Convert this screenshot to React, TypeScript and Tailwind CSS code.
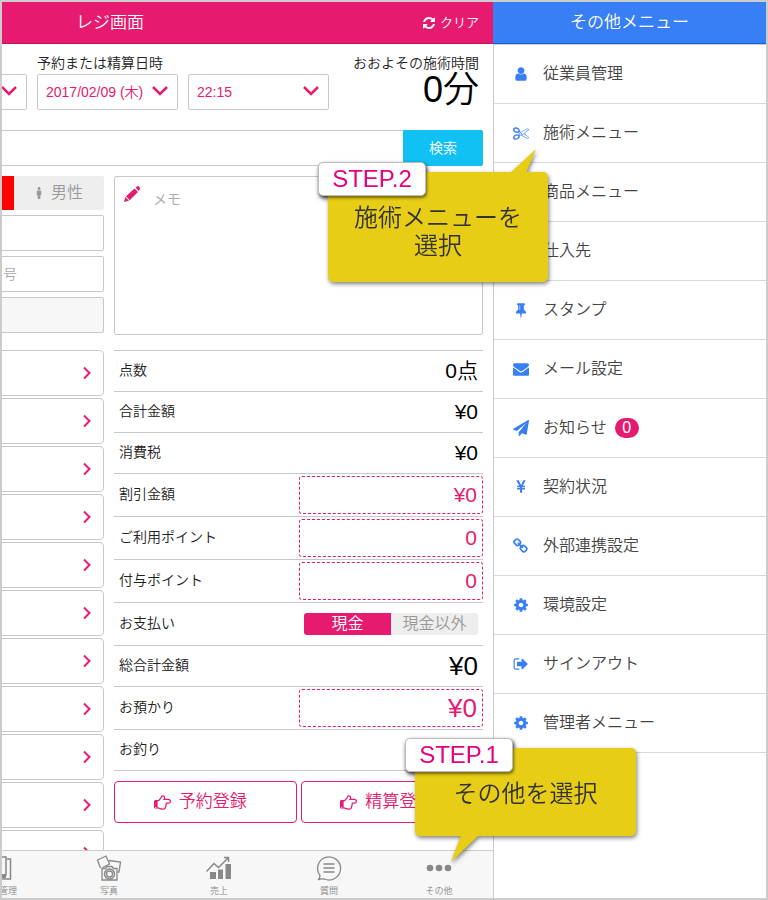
import type { ReactNode } from 'react';
import { FaMale } from 'react-icons/fa';

const ICONS = {
  user: 'M1536 1399q0 109-62.5 187t-150.5 78h-854q-88 0-150.5-78t-62.5-187q0-85 8.5-160.5t31.5-152 58.5-131 94-89 134.5-34.5q131 128 313 128t313-128q76 0 134.5 34.5t94 89 58.5 131 31.5 152 8.5 160.5zm-256-887q0 159-112.5 271.5t-271.5 112.5-271.5-112.5-112.5-271.5 112.5-271.5 271.5-112.5 271.5 112.5 112.5 271.5z',
  scissors: 'M960 896q26 0 45 19t19 45-19 45-45 19-45-19-19-45 19-45 45-19zm300 64l507 398q28 20 25 56-5 35-35 51l-128 64q-13 7-29 7-17 0-31-8l-690-387-110 66q-8 4-12 5 14 49 10 97-7 77-56 147.5t-132 123.5q-132 84-277 84-136 0-222-78-90-84-79-207 7-76 56-147t131-124q132-84 278-84 83 0 151 31 9-13 22-22l122-73-122-73q-13-9-22-22-68 31-151 31-146 0-278-84-82-53-131-124t-56-147q-5-59 15.5-113t63.5-93q85-79 222-79 145 0 277 84 83 52 132 123t56 148q4 48-10 97 4 1 12 5l110 66 690-387q14-8 31-8 16 0 29 7l128 64q30 16 35 51 3 36-25 56zm-681-260q46-42 21-108t-106-117q-92-59-192-59-74 0-113 36-46 42-21 108t106 117q92 59 192 59 74 0 113-36zm-85 745q81-51 106-117t-21-108q-39-36-113-36-100 0-192 59-81 51-106 117t21 108q39 36 113 36 100 0 192-59zm178-613l96 58v-11q0-36 33-56l14-8-79-44-26 26q-3 3-10 11t-12 12q-2 2-4 3.5t-3 2.5zm224 224l96 32 736-576-128-64-768 431v113l-160 96 9 8q2 2 7 6 4 4 11 12t11 12l26 26zm704 416l128-64-520-408-177 138q-2 3-13 7z',
  tack: 'M800 864v-448q0-14-9-23t-23-9-23 9-9 23v448q0 14 9 23t23 9 23-9 9-23zm672 352q0 26-19 45t-45 19h-429l-51 483q-2 12-10.5 20.5t-20.5 8.5h-1q-27 0-32-27l-76-485h-404q-26 0-45-19t-19-45q0-123 78.5-221.5t177.5-98.5v-512q-52 0-90-38t-38-90 38-90 90-38h640q52 0 90 38t38 90-38 90-90 38v512q99 0 177.5 98.5t78.5 221.5z',
  envelope: 'M1792 710v794q0 66-47 113t-113 47h-1472q-66 0-113-47t-47-113v-794q44 49 101 87 362 246 497 345 57 42 92.5 65.5t94.5 48 110 24.5h2q51 0 110-24.5t94.5-48 92.5-65.5q170-123 498-345 57-39 100-87zm0-294q0 79-49 151t-122 123q-376 261-468 325-10 7-42.5 30.5t-54 38-52 32.5-57.5 27-50 9h-2q-23 0-50-9t-57.5-27-52-32.5-54-38-42.5-30.5q-91-64-262-182.5t-205-142.5q-62-42-117-115.5t-55-136.5q0-78 41.5-130t118.5-52h1472q65 0 112.5 47t47.5 113z',
  plane: 'M1764 11q33 24 27 64l-256 1536q-5 29-32 45-14 8-31 8-11 0-24-5l-453-185-242 295q-18 23-49 23-13 0-22-4-19-7-30.5-23.5t-11.5-36.5v-349l864-1059-1069 925-395-162q-37-14-40-55-2-40 32-59l1664-960q15-9 32-9 20 0 36 11z',
  yen: 'M985.5 1536h-172q-13 0-22.5-9t-9.5-23v-330h-288q-13 0-22.5-9t-9.5-23v-103q0-13 9.5-22.5t22.5-9.5h288v-85h-288q-13 0-22.5-9t-9.5-23v-104q0-13 9.5-22.5t22.5-9.5h214l-321-578q-8-16 0-32 10-16 28-16h194q19 0 29 18l215 425q19 38 56 125 10-24 30.5-68t27.5-61l191-420q8-19 29-19h191q17 0 27 16 9 14 1 31l-313 579h215q13 0 22.5 9.5t9.5 22.5v104q0 14-9.5 23t-22.5 9h-290v85h290q13 0 22.5 9.5t9.5 22.5v103q0 14-9.5 23t-22.5 9h-290v330q0 13-9.5 22.5t-22.5 9.5z',
  link: 'M1456 1216q0-40-28-68l-208-208q-28-28-68-28-42 0-72 32 3 3 19 18.5t21.5 21.5 15 19 13 25.5 3.5 27.5q0 40-28 68t-68 28q-15 0-27.5-3.5t-25.5-13-19-15-21.5-21.5-18.5-19q-33 31-33 73 0 40 28 68l206 207q27 27 68 27 40 0 68-26l147-146q28-28 28-67zm-703-705q0-40-28-68l-206-207q-28-28-68-28-39 0-68 27l-147 146q-28 28-28 67 0 40 28 68l208 208q27 27 68 27 42 0 72-31-3-3-19-18.5t-21.5-21.5-15-19-13-25.5-3.5-27.5q0-40 28-68t68-28q15 0 27.5 3.5t25.5 13 19 15 21.5 21.5 18.5 19q33-31 33-73zm895 705q0 120-85 203l-147 146q-83 83-203 83-121 0-204-85l-206-207q-83-83-83-203 0-123 88-209l-88-88q-86 88-208 88-120 0-204-84l-208-208q-84-84-84-204t85-203l147-146q83-83 203-83 121 0 204 85l206 207q83 83 83 203 0 123-88 209l88 88q86-88 208-88 120 0 204 84l208 208q84 84 84 204z',
  cog: 'M1152 896q0-106-75-181t-181-75-181 75-75 181 75 181 181 75 181-75 75-181zm512-109v222q0 12-8 23t-20 13l-185 28q-19 54-39 91 35 50 107 138 10 12 10 25t-9 23q-27 37-99 108t-94 71q-12 0-26-9l-138-108q-44 23-91 38-16 136-29 186-7 28-36 28h-222q-14 0-24.5-8.500t-11.500-21.500l-28-184q-49-16-90-37l-141 107q-10 9-25 9-14 0-25-11-126-114-165-168-7-10-7-23 0-12 8-23 15-21 51-66.500t54-70.500q-27-50-41-99l-183-27q-13-2-21-12.500t-8-23.500v-222q0-12 8-23t19-13l186-28q14-46 39-92-40-57-107-138-10-12-10-24 0-10 9-23 26-36 98.500-107.500t94.500-71.500q13 0 26 10l138 107q44-23 91-38 16-136 29-186 7-28 36-28h222q14 0 24.500 8.500t11.500 21.500l28 184q49 16 90 37l142-107q9-9 24-9 13 0 25 10 129 119 165 170 7 8 7 22 0 12-8 23-15 21-51 66.500t-54 70.500q26 50 41 98l183 28q13 2 21 12.500t8 23.500z',
  signOut: 'M704 1440q0 4 1 20t.5 26.500-3 23.500-10 19.500-20.500 6.500h-320q-119 0-203.500-84.500t-84.500-203.500v-704q0-119 84.500-203.500t203.500-84.500h320q13 0 22.500 9.500t9.500 22.500q0 4 1 20t.5 26.500-3 23.500-10 19.500-20.500 6.500h-320q-66 0-113 47t-47 113v704q0 66 47 113t113 47h312l11.500 1 11.500 3 8 5.500 7 9 2 13.500zm928-544q0 26-19 45l-544 544q-19 19-45 19t-45-19-19-45v-288h-448q-26 0-45-19t-19-45v-384q0-26 19-45t45-19h448v-288q0-26 19-45t45-19 45 19l544 544q19 19 19 45z',
  refresh: 'M1639 1056q0 5-1 7-64 268-268 434.500t-478 166.500q-146 0-282.500-55t-243.500-157l-129 129q-19 19-45 19t-45-19-19-45v-448q0-26 19-45t45-19h448q26 0 45 19t19 45-19 45l-137 137q71 66 161 102t187 36q134 0 250-65t186-179q11-17 53-117 8-23 30-23h192q13 0 22.500 9.500t9.500 22.500zm25-800v448q0 26-19 45t-45 19h-448q-26 0-45-19t-19-45 19-45l138-138q-148-137-349-137-134 0-250 65t-186 179q-11 17-53 117-8 23-30 23h-199q-13 0-22.500-9.500t-9.500-22.500v-7q65-268 270-434.500t480-166.500q146 0 284 55.500t245 156.500l130-129q19-19 45-19t45 19 19 45z',
  hand: 'M256 1408q0-26-19-45t-45-19-45 19-19 45 19 45 45 19 45-19 19-45zm1408-640q0-51-39-89.500t-89-38.500h-576q0-20 15-48.500t33-55 33-68 15-84.500q0-67-44.500-97.500t-115.500-30.500q-24 0-90 139-24 44-37 65-40 64-112 145-71 81-101 106-69 57-140 57h-32v640h32q72 0 167 32t193.500 64 179.500 32q189 0 189-167 0-26-5-56 30-16 47.500-52.500t17.500-73.500-18-69q53-50 53-119 0-25-10-55.500t-25-47.500h331q52 0 90-38t38-90zm128-1q0 105-75.500 181t-180.500 76h-169q-4 62-37 119 3 21 3 43 0 101-60 178 1 139-85 219.500t-227 80.500q-133 0-322-69-164-59-223-59h-288q-53 0-90.500-37.500t-37.500-90.500v-640q0-53 37.500-90.500t90.500-37.500h288q10 0 21.500-4.500t23.500-14 22.500-18 24-22.500 20.500-21.500 19-21.500 14-17q65-74 100-129 13-21 33-62t37-72 40.500-63 55-49.500 69.500-17.500q125 0 206.500 67t81.500 189q0 68-22 128h374q104 0 180 76t76 179z',
};

type IconName = keyof typeof ICONS;

const Icon = ({ name, className }: { name: IconName; className: string }) => (
  <svg viewBox="0 0 1792 1792" fill="currentColor" aria-hidden="true" className={className}>
    <path d={ICONS[name]} />
  </svg>
);

const menuItems: { label: string; icon?: IconName; badge?: number }[] = [
  { label: '従業員管理', icon: 'user' },
  { label: '施術メニュー', icon: 'scissors' },
  { label: '商品メニュー' },
  { label: '仕入先' },
  { label: 'スタンプ', icon: 'tack' },
  { label: 'メール設定', icon: 'envelope' },
  { label: 'お知らせ', icon: 'plane', badge: 0 },
  { label: '契約状況', icon: 'yen' },
  { label: '外部連携設定', icon: 'link' },
  { label: '環境設定', icon: 'cog' },
  { label: 'サインアウト', icon: 'signOut' },
  { label: '管理者メニュー', icon: 'cog' },
];

const Picker = ({ label, value, className }: { label: string; value: string; className: string }) => (
  <div className={`relative h-9 shrink-0 ${className}`}>
    <select
      aria-label={label}
      className="h-full w-full appearance-none rounded-xs border border-[#c8c8c8] bg-white pl-2 text-sm text-[#e61a6e]"
    >
      <option>{value}</option>
    </select>
    <svg viewBox="0 0 16 10" className="pointer-events-none absolute right-[10px] top-3 h-[10px] w-4 text-[#e61a6e]" fill="none" stroke="currentColor" strokeWidth="2.5">
      <path d="M1 1l7 7 7-7" />
    </svg>
  </div>
);

const Row = ({ label, htmlFor, className, children }: { label: string; htmlFor?: string; className: string; children?: ReactNode }) => (
  <div className={`flex items-center justify-between border-b border-[#c8c8c8] pl-[5px] ${className}`}>
    <label htmlFor={htmlFor} className="pb-[2px] text-sm text-[#222]">{label}</label>
    {children}
  </div>
);

const AmountInput = ({ id, value, className }: { id: string; value: string; className: string }) => (
  <input
    id={id}
    defaultValue={value}
    className={`h-[38px] w-[184px] rounded-[3px] border border-dashed border-[#e61a6e] bg-white pr-[5px] text-right text-[#e61a6e] ${className}`}
  />
);

const Tab = ({ label, children }: { label: string; children: ReactNode }) => (
  <button className="flex w-[110px] shrink-0 flex-col items-center pt-1 text-[#888]">
    {children}
    <span className="mt-1 text-[9px] leading-3">{label}</span>
  </button>
);

const StepLabel = ({ children }: { children: ReactNode }) => (
  <span className="absolute -left-[10px] -top-[10px] flex h-[34px] w-[108px] items-center justify-center rounded-[5px] border border-[#bbb] bg-white text-2xl text-[#e4007f] shadow-[1px_2px_3px_rgba(0,0,0,0.5)]">
    {children}
  </span>
);

export default function App() {
  return (
    <div className="relative flex h-screen min-h-[600px] overflow-hidden border-2 border-[#ccc] bg-white font-['Liberation_Sans','Noto_Sans_CJK_JP',sans-serif] font-[350]">
      {/* レジ画面 */}
      <section className="flex min-w-0 flex-1 flex-col overflow-hidden">
        <header className="flex h-[42px] shrink-0 items-center justify-between border-b border-[#c01458] bg-[#e61a6e] pl-[74px] pr-[14px] text-white">
          <h1 className="text-[17px]">レジ画面</h1>
          <button className="flex items-center gap-1 text-[13px]">
            <Icon name="refresh" className="size-[14px]" />
            クリア
          </button>
        </header>

        <main className="flex min-h-0 flex-1 flex-col overflow-hidden pr-[10px]">
          {/* 日時 */}
          <div className="flex h-[86px] shrink-0 justify-between pr-1 pt-[9px]">
            <div className="flex flex-col">
              <span className="pl-[35px] text-sm leading-[21px] text-[#222]">予約または精算日時</span>
              <div className="-ml-10 flex gap-[10px]">
                <Picker label="担当" value="" className="w-[65px]" />
                <Picker label="予約日" value="2017/02/09 (木)" className="w-[141px]" />
                <Picker label="時刻" value="22:15" className="w-[141px]" />
              </div>
            </div>
            <div className="shrink-0 text-right">
              <p className="text-sm leading-[21px] text-[#222]">おおよその施術時間</p>
              <p className="text-4xl leading-8 text-black">0分</p>
            </div>
          </div>

          {/* 検索 */}
          <div className="flex h-9 shrink-0">
            <input aria-label="顧客検索" className="min-w-0 flex-1 border-y border-[#c8c8c8] bg-white" />
            <button className="w-20 rounded-r-xs bg-[#12c1f4] text-sm text-white">検索</button>
          </div>

          <div className="flex min-h-0 flex-1 gap-[10px] pt-[10px]">
            <div className="flex w-[102px] shrink-0 flex-col overflow-hidden">
              <div className="flex h-[34px] shrink-0 overflow-hidden rounded-r-xs">
                <button aria-label="女性" className="w-3 bg-[#f00]" />
                <button className="flex flex-1 items-center justify-center gap-[6px] bg-[#eee] pr-[2px] text-base text-[#999]">
                  <FaMale className="size-3" />
                  男性
                </button>
              </div>
              <div className="-ml-14 mt-[5px] flex shrink-0 flex-col gap-[5px]">
                <input aria-label="お名前" className="h-9 rounded-xs border border-[#c8c8c8] bg-white" />
                <input aria-label="会員番号" placeholder="会員番号" className="h-9 rounded-xs border border-[#c8c8c8] bg-white pl-[14px] text-sm placeholder:text-[#aaa]" />
                <input aria-label="生年月日" disabled className="h-9 rounded-xs border border-[#c8c8c8] bg-[#f7f7f7]" />
              </div>
              <div className="-ml-4 mt-[17px] flex min-h-0 flex-1 flex-col gap-[2px] overflow-hidden">
                {Array.from({ length: 11 }, (_, i) => (
                  <button key={i} aria-label={`明細${i + 1}`} className="flex h-[46px] shrink-0 items-center justify-end rounded-[4px] border border-[#c8c8c8] pr-3">
                    <svg viewBox="0 0 8 14" className="h-[14px] w-2 text-[#e61a6e]" fill="none" stroke="currentColor" strokeWidth="2">
                      <path d="M1 1.500l5.500 5.500-5.500 5.500" />
                    </svg>
                  </button>
                ))}
              </div>
            </div>

            <div className="flex min-w-0 flex-1 flex-col">
              <label className="flex h-[159px] shrink-0 rounded-xs border border-[#c8c8c8] pl-2 pt-2">
                <svg viewBox="0 0 20 20" className="size-5 text-[#e61a6e]" fill="currentColor" aria-hidden="true">
                  <path d="M1 17l1.300-5 3.700 3.700zM3 11.200l8.500-7.700 3.500 3.500-8.300 8.200zM12.500 2.600l1.300-1.200q1.300-.9 2.500.3 1.500 1.500.5 2.800l-1 1.400z" />
                </svg>
                <textarea aria-label="メモ" placeholder="メモ" className="ml-[10px] flex-1 resize-none pt-1 text-sm outline-none placeholder:text-[#aaa]" />
              </label>

              <div className="mt-[15px] flex flex-col border-t border-[#c8c8c8]">
                <Row label="点数" className="h-[41px] pr-[5px]"><output className="text-[21px]">0点</output></Row>
                <Row label="合計金額" className="h-[41px] pr-[5px]"><output className="text-[21px]">¥0</output></Row>
                <Row label="消費税" className="h-[41px] pr-[5px]"><output className="text-[21px]">¥0</output></Row>
                <Row label="割引金額" htmlFor="discount" className="h-[43px]"><AmountInput id="discount" value="¥0" className="text-[21px]" /></Row>
                <Row label="ご利用ポイント" htmlFor="use-point" className="h-[43px]"><AmountInput id="use-point" value="0" className="text-[21px]" /></Row>
                <Row label="付与ポイント" htmlFor="add-point" className="h-[43px]"><AmountInput id="add-point" value="0" className="text-[21px]" /></Row>
                <Row label="お支払い" className="h-[43px] pr-[5px]">
                  <div className="flex h-[22px] w-[174px] overflow-hidden rounded-[3px] text-base leading-[22px]">
                    <button className="flex-1 bg-[#e61a6e] text-white">現金</button>
                    <button className="flex-1 bg-[#eee] text-[#999]">現金以外</button>
                  </div>
                </Row>
                <Row label="総合計金額" className="h-[41px] pr-[5px]"><output className="text-[26px]">¥0</output></Row>
                <Row label="お預かり" htmlFor="deposit" className="h-[43px]"><AmountInput id="deposit" value="¥0" className="text-[26px]" /></Row>
                <Row label="お釣り" className="h-[41px]" />
              </div>

              <div className="mt-[10px] flex shrink-0 gap-1">
                {['予約登録', '精算登録'].map((label) => (
                  <button key={label} className="flex h-[42px] flex-1 items-center justify-center gap-2 rounded-[4px] border border-[#e61a6e] pr-[10px] text-[17px] text-[#e61a6e]">
                    <Icon name="hand" className="size-[17px]" />
                    {label}
                  </button>
                ))}
              </div>
            </div>
          </div>
        </main>

        {/* タブバー */}
        <nav className="-mr-px flex h-12 shrink-0 justify-end overflow-hidden border-t border-[#ccc] bg-[#f7f7f7]">
          <Tab label="顧客管理">
            <svg viewBox="0 0 26 26" className="size-[26px]" fill="none" stroke="currentColor" strokeWidth="1.5">
              <path d="M3 2h17v18H3zM21 4h3.500v20H7v-3" />
              <path d="M3 19h17v4H3z" fill="currentColor" stroke="none" />
            </svg>
          </Tab>
          <Tab label="写真">
            <svg viewBox="0 0 26 26" className="size-[26px]" fill="none" stroke="currentColor" strokeWidth="1.3">
              <path d="M4.500 13L1.500 5l8.500-4 3.500 8-7 3.500M13 5.500l11.500 1.500-1.500 10h-1.500" />
              <path d="M7 13.500h2.500l1.500-2h5l1.500 2h3.500v11.500H6V13.500z" />
              <circle cx="13.500" cy="19" r="5" fill="#f7f7f7" strokeWidth="1.500" />
              <circle cx="13.500" cy="19" r="3" />
            </svg>
          </Tab>
          <Tab label="売上">
            <svg viewBox="0 0 26 26" className="size-[26px]" fill="none" stroke="currentColor" strokeWidth="1.5">
              <path d="M.5 16.500L8 8.500l4.500 4L22 3M18 2.500h4.500V7" />
              <path d="M4 17h6v7H4zM12 14.500h5V24h-5zM19.500 9h5.500v15h-5.500z" fill="currentColor" stroke="none" />
            </svg>
          </Tab>
          <Tab label="質問">
            <svg viewBox="0 0 26 26" className="size-[26px]" fill="none" stroke="currentColor" strokeWidth="1.3">
              <path d="M4 20.500A11.500 11.500 0 1 1 8.500 24Q5 23.500 2 24.800 4 23 4 20.500z" />
              <path d="M7.500 9h11M7.500 13h11M7.500 17h11" strokeWidth="1.500" />
            </svg>
          </Tab>
          <Tab label="その他">
            <svg viewBox="0 0 26 26" className="size-[26px]" fill="currentColor">
              <circle cx="4" cy="13" r="3.300" />
              <circle cx="13" cy="13" r="3.300" />
              <circle cx="22" cy="13" r="3.300" />
            </svg>
          </Tab>
        </nav>
      </section>

      {/* その他メニュー */}
      <aside className="flex w-[273px] shrink-0 flex-col bg-white">
        <header className="flex h-[42px] shrink-0 items-center justify-center border-b border-[#1560e0] bg-[#387ef5] text-white">
          <h2 className="text-[17px]">その他メニュー</h2>
        </header>
        <nav className="flex-1 border-l border-t border-[#ccc]">
          {menuItems.map((item) => (
            <a key={item.label} href="#" className="flex h-[59px] items-center border-b border-[#d9d9d9] pl-[19px] text-base text-[#444]">
              <span className="mr-[14px] w-4">
                {item.icon && <Icon name={item.icon} className="size-4 text-[#387ef5]" />}
              </span>
              {item.label}
              {item.badge !== undefined && (
                <span className="ml-2 flex h-5 w-6 items-center justify-center rounded-full bg-[#e61a6e] text-white">{item.badge}</span>
              )}
            </a>
          ))}
        </nav>
      </aside>

      {/* 操作ガイド */}
      <div className="absolute right-[218px] top-[170px] h-[110px] w-[220px] rounded-[5px] bg-[#e8cd17] pt-8 text-center text-2xl leading-7 text-[#333] drop-shadow-[1px_2px_2px_rgba(0,0,0,0.5)]">
        <StepLabel>STEP.2</StepLabel>
        施術メニューを
        <br />
        選択
        <svg viewBox="0 0 26 24" className="absolute -top-[23px] right-3 h-6 w-[26px]" fill="#e8cd17">
          <path d="M0 24L26 0 16 24z" />
        </svg>
      </div>
      <div className="absolute bottom-[62px] right-[130px] h-[88px] w-[221px] rounded-[5px] bg-[#e8cd17] pt-8 text-center text-2xl leading-7 text-[#333] drop-shadow-[1px_2px_2px_rgba(0,0,0,0.5)]">
        <StepLabel>STEP.1</StepLabel>
        その他を選択
        <svg viewBox="0 0 28 27" className="absolute -bottom-[26px] left-9 h-[27px] w-7" fill="#e8cd17">
          <path d="M10 0h18L0 27z" />
        </svg>
      </div>
    </div>
  );
}
